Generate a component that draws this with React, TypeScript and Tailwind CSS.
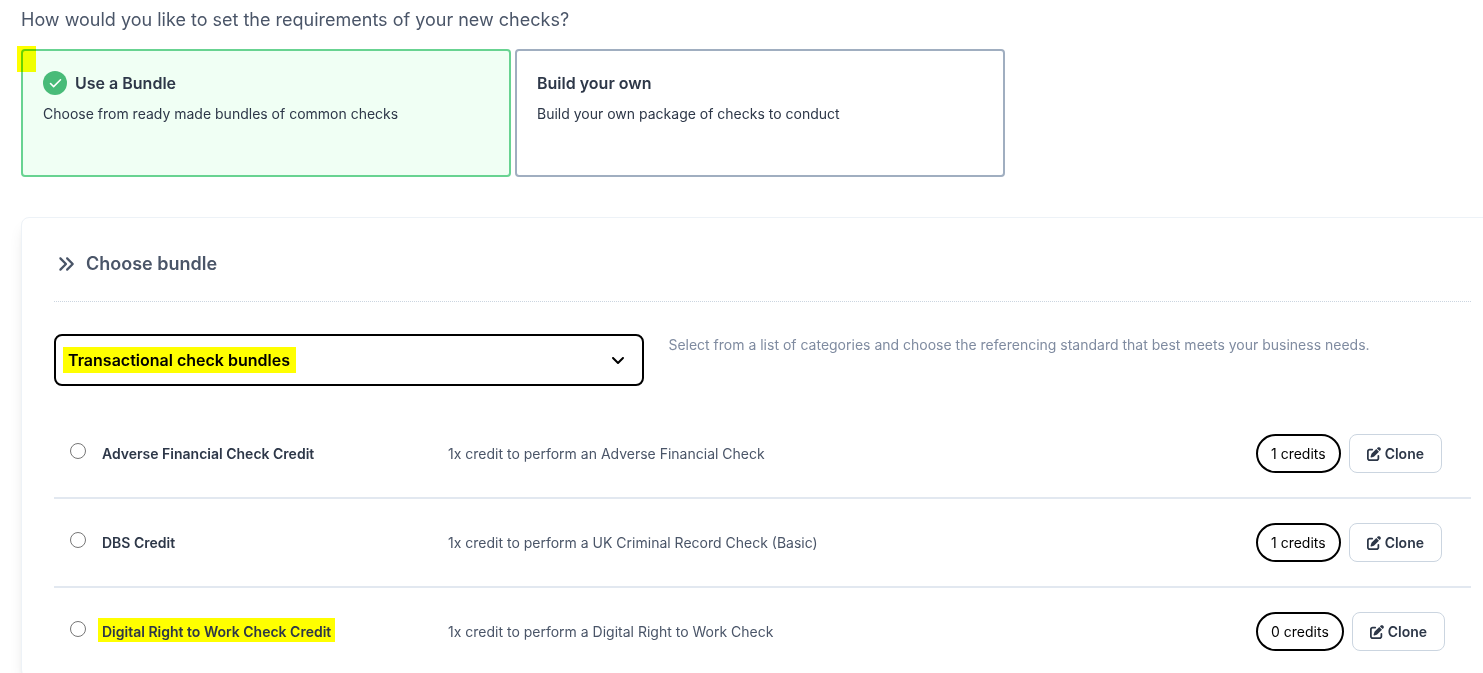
import React from 'react';
import { Check } from 'lucide-react';
import { FaAnglesRight, FaAngleDown, FaPenToSquare } from 'react-icons/fa6';

const bundles = [
  { id: 'adverse', name: 'Adverse Financial Check Credit', description: '1x credit to perform an Adverse Financial Check', credits: 1 },
  { id: 'dbs', name: 'DBS Credit', description: '1x credit to perform a UK Criminal Record Check (Basic)', credits: 1 },
  { id: 'rtw', name: 'Digital Right to Work Check Credit', description: '1x credit to perform a Digital Right to Work Check', credits: 0, highlighted: true },
];

const modes = [
  { id: 'bundle', title: 'Use a Bundle', text: 'Choose from ready made bundles of common checks' },
  { id: 'own', title: 'Build your own', text: 'Build your own package of checks to conduct' },
];

const ModePicker = () => {
  const [mode, setMode] = React.useState('bundle');

  return (
    <div className="relative mt-[15px] grid max-w-[984px] grid-cols-2 gap-1">
      {modes.map((item) => (
        <button
          key={item.id}
          type="button"
          aria-pressed={mode === item.id}
          onClick={() => setMode(item.id)}
          className={`flex min-h-32 flex-col items-start rounded border-2 p-5 text-left ${
            mode === item.id ? 'border-[#68d391] bg-[#f0fff4]' : 'border-[#a0aec0] bg-white'
          }`}
        >
          <span className="flex items-center gap-2 text-base font-semibold text-[#2d3748]">
            {mode === item.id && (
              <span className="flex h-6 w-6 items-center justify-center rounded-full bg-[#48bb78]">
                <Check className="h-[15px] w-[15px] text-white" strokeWidth={2.5} />
              </span>
            )}
            {item.title}
          </span>
          <span className="mt-2 text-sm leading-[22px] text-[#2d3748]">{item.text}</span>
        </button>
      ))}
      {/* Marker over the corner of the first option */}
      <div className="pointer-events-none absolute -left-1 -top-[3px] h-[26px] w-[19px] bg-[#ffff00] mix-blend-multiply"></div>
    </div>
  );
};

const BundleTable = () => {
  const [selected, setSelected] = React.useState('');

  return (
    <table className="mt-6 w-full table-fixed border-separate border-spacing-0 text-left text-sm">
      <colgroup>
        <col className="w-8" />
        <col className="w-[346px]" />
        <col />
        <col className="w-[231px]" />
      </colgroup>
      <tbody>
        {bundles.map((bundle) => (
          <tr key={bundle.id} className="*:border-b-2 *:border-[#e2e8f0]">
            <td className="pb-1.5 pl-4">
              <input
                id={bundle.id}
                type="radio"
                name="bundle"
                checked={selected === bundle.id}
                onChange={() => setSelected(bundle.id)}
                className="block h-4 w-4"
              />
            </td>
            <td className="pl-4">
              <label htmlFor={bundle.id} className="font-semibold text-[#2d3748]">
                <span className={bundle.highlighted ? '-ml-1 bg-[#ffff00] px-1 pb-0.5 pt-[5px]' : ''}>{bundle.name}</span>
              </label>
            </td>
            <td className="pl-4 text-[#4a5568]">{bundle.description}</td>
            <td className="py-6 pl-4">
              <div className="flex items-center gap-2">
                <span className="rounded-full border-2 border-black px-[13px] py-2 leading-[19px] text-black">
                  {bundle.credits} credits
                </span>
                <button
                  type="button"
                  className="flex items-center gap-1 rounded-lg border border-[#cbd5e0] bg-white px-[17px] py-2 font-semibold leading-[21px] text-[#2d3748]"
                >
                  <FaPenToSquare className="h-[14px] w-[14px]" />
                  Clone
                </button>
              </div>
            </td>
          </tr>
        ))}
      </tbody>
    </table>
  );
};

export default function App() {
  return (
    <div className="min-h-screen overflow-hidden bg-white pl-[21px] pt-1.5 font-['Inter',sans-serif] antialiased">
      <h1 className="text-lg leading-7 text-[#4a5568]">How would you like to set the requirements of your new checks?</h1>
      <ModePicker />

      {/* Panel runs off the right edge of the window */}
      <section className="-mr-[21px] mt-10 rounded-lg border border-[#edf2f7] bg-white px-8 pt-8 shadow-lg">
        <header className="flex items-center gap-[11px] border-b border-dotted border-[#cbd5e0] pb-[23px] pl-[3px]">
          <FaAnglesRight className="h-[18px] w-[18px] text-[#4a5568]" />
          <h2 className="text-lg font-semibold leading-7 text-[#4a5568]">Choose bundle</h2>
        </header>

        <div className="mt-8 flex">
          <div className="relative isolate w-5/12">
            <div className="absolute left-[9px] top-[13px] -z-10 h-[26px] w-[233px] bg-[#ffff00]"></div>
            <select
              aria-label="Bundle category"
              className="block h-[52px] w-full appearance-none rounded-lg border-2 border-black bg-transparent px-3 text-base font-semibold text-black"
            >
              <option>Transactional check bundles</option>
            </select>
            <FaAngleDown className="pointer-events-none absolute right-[18px] top-[18px] h-4 w-4 text-black" />
          </div>
          <p className="flex-1 pl-6 text-sm leading-[22px] text-[#7f8ba0]">
            Select from a list of categories and choose the referencing standard that best meets your business needs.
          </p>
        </div>

        <BundleTable />
      </section>
    </div>
  );
}
